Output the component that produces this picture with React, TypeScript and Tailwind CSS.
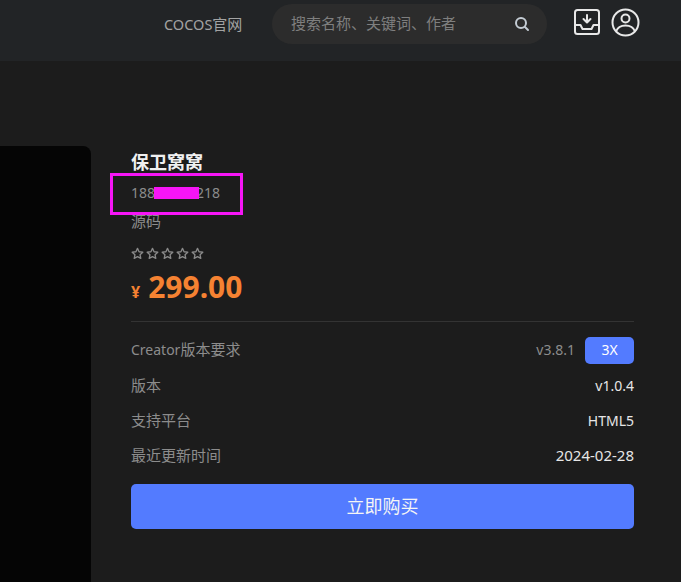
import React from 'react'

const font = { fontFamily: '"Noto Sans", "Noto Sans CJK SC", sans-serif' }

function Star() {
  return (
    <svg width="13" height="13" viewBox="0 0 24 24" fill="none" stroke="#8a8a8a" strokeWidth="2.4" strokeLinejoin="round">
      <path d="M12 2.5l2.9 6.3 6.9.8-5.1 4.7 1.4 6.8-6.1-3.4-6.1 3.4 1.4-6.8L2.200 9.600l6.900-.8z" />
    </svg>
  )
}

function Row({ label, value, big }: { label: string; value: string; big?: boolean }) {
  return (
    <div className="flex h-[35px] items-center justify-between text-[15px]">
      <span className="text-[#8c8c8c]">{label}</span>
      <span className={big ? 'text-[15px] text-[#e6e6e6]' : 'text-sm text-[#e6e6e6]'}>{value}</span>
    </div>
  )
}

export default function App() {
  return (
    <div className="flex h-[582px] w-[681px] flex-col overflow-hidden bg-[#1c1c1c]" style={font}>
      <header className="flex h-[61px] shrink-0 items-start bg-[#222426] pl-[164px]">
        <a className="mt-[14px] w-[78px] whitespace-nowrap text-[15px] leading-5 text-[#a3a3a3]">
          <span className="text-[14.500px]">COCOS</span>官网
        </a>
        <div className="ml-[30px] mt-1 flex h-10 w-[275px] items-center justify-between rounded-[20px] bg-[#2c2c2c] pl-[19px] pr-[17px]">
          <span className="pb-[2px] text-[15px] text-[#7f7f7f]">搜索名称、关键词、作者</span>
          <svg width="16" height="16" viewBox="0 0 16 16" fill="none" stroke="#c4ccd4" strokeWidth="2" strokeLinecap="round">
            <circle cx="7" cy="7" r="5" />
            <path d="M11 11l3 3" />
          </svg>
        </div>
        <svg className="ml-[27px] mt-[9px]" width="26" height="26" viewBox="0 0 26 26" fill="none" stroke="#e8e8e8" strokeWidth="2" strokeLinejoin="round" strokeLinecap="round">
          <rect x="1" y="1" width="24" height="24" rx="2.500" />
          <path d="M1 16h5.500l2 4h9l2-4H25" />
          <path d="M13 6v7M9.500 10L13 13.500 16.500 10" />
        </svg>
        <svg className="ml-[11px] mt-[8px]" width="29" height="29" viewBox="0 0 29 29" fill="none" stroke="#e8e8e8" strokeWidth="2">
          <circle cx="14.500" cy="14.500" r="13" />
          <circle cx="14.500" cy="10.500" r="4" />
          <path d="M5 23.500c1.500-4 5-6 9.500-6s8 2 9.500 6" />
        </svg>
      </header>

      <main className="flex flex-1 items-start pt-[85px]">
        <div className="h-[500px] w-[91px] shrink-0 rounded-tr-lg bg-[#050505]" />
        <section className="ml-10 w-[503px] pt-1">
          <h1 className="text-lg font-bold leading-6 text-[#f0f0f0]">保卫窝窝</h1>
          <div className="relative mt-[9px] h-5 text-sm leading-5 text-[#8c8c8c]">
            188<span className="inline-block w-[41px]" />218
            <div className="absolute left-[23px] top-[4px] h-[12px] w-[45px] bg-[#f615f6]" />
            <div className="absolute left-[-21px] top-[-10px] h-[42px] w-[133px] border-[3px] border-[#f615f6]" />
          </div>
          <div className="mt-[8px] text-[15px] leading-5 text-[#8c8c8c]">源码</div>
          <div className="mt-[16px] flex gap-[2px]">
            <Star /><Star /><Star /><Star /><Star />
          </div>
          <div className="mt-[7px] flex items-baseline font-bold leading-10 text-[#f58232]">
            <span className="text-base">¥</span>
            <span className="ml-[8px] text-[30px]">299.00</span>
          </div>
          <div className="mt-[14px] border-t border-[#333333]" />
          <div className="mt-[11px] flex h-[35px] items-center justify-between text-[15px]">
            <span className="pb-[2px] text-[#8c8c8c]"><span className="text-sm">Creator</span>版本要求</span>
            <div className="flex items-center gap-[10px] text-sm">
              <span className="pb-[2px] text-[#8c8c8c]">v3.8.1</span>
              <span className="flex h-[27px] w-[49px] items-center justify-center rounded-[5px] bg-[#537bff] pb-[2px] text-white">3X</span>
            </div>
          </div>
          <Row label="版本" value="v1.0.4" />
          <Row label="支持平台" value="HTML5" />
          <Row label="最近更新时间" value="2024-02-28" big />
          <button className="mt-[11px] h-[45px] w-full rounded-[5px] bg-[#537bff] pb-[2px] text-lg text-[#f5f5f5]">立即购买</button>
        </section>
      </main>
    </div>
  )
}
